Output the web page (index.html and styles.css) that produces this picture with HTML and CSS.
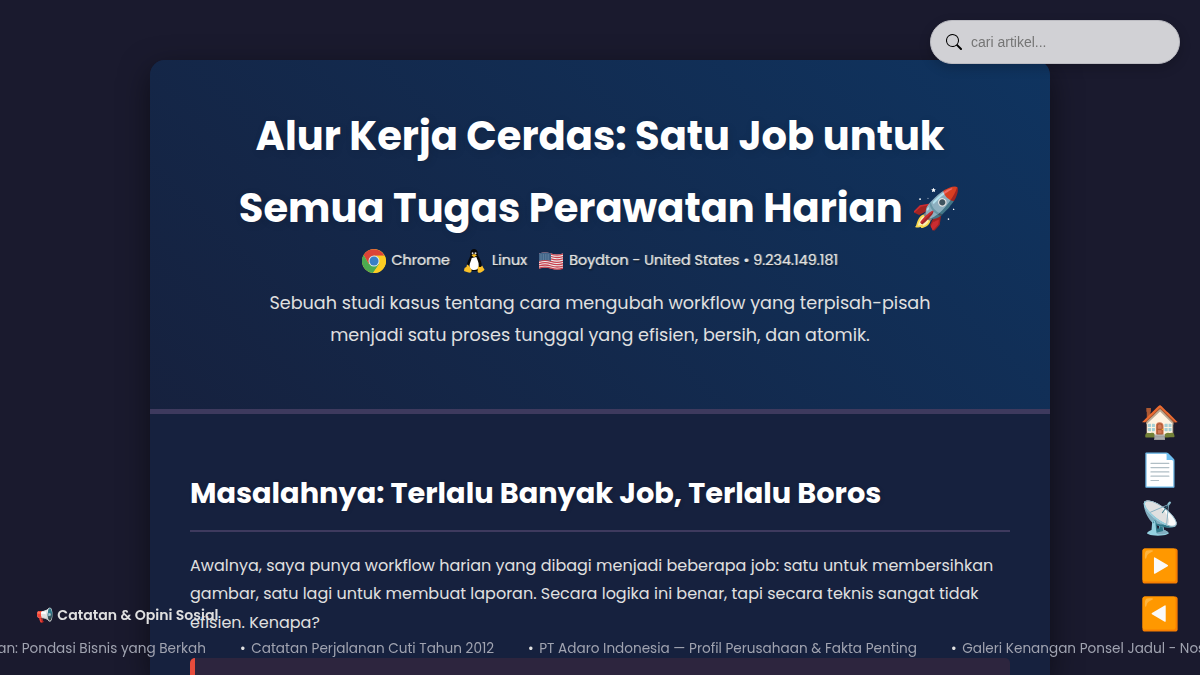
FILE: index.html
```html
<!DOCTYPE html>
<html lang="id">
<head>
<meta charset="utf-8">
<title>Alur Kerja Cerdas</title>
<link rel="stylesheet" href="styles.css">
</head>
<body>
<form class="search">
  <svg class="search-icon" viewBox="0 0 16 16" width="16" height="16" fill="currentColor"><path d="M11.742 10.344a6.5 6.5 0 1 0-1.397 1.398h-.001q.044.06.098.115l3.85 3.85a1 1 0 0 0 1.415-1.414l-3.85-3.85a1 1 0 0 0-.115-.1zM12 6.5a5.5 5.5 0 1 1-11 0 5.5 5.5 0 0 1 11 0"/></svg>
  <input class="search-input" type="text" placeholder="cari artikel...">
</form>
<main class="container">
  <header class="header">
    <h1 class="title"><span class="title-a">Alur Kerja Cerdas: Satu Job untuk</span><span class="title-b">Semua Tugas Perawatan Harian <span class="rocket">🚀</span></span></h1>
    <div class="visitor">
      <svg class="browser-icon" viewBox="0 0 48 48" width="24" height="24"><circle cx="24" cy="24" r="24" fill="#f8cf35"/><path d="M3.200 12A24 24 0 0 1 44.800 13.500H24L13.600 30Z" fill="#dc4437"/><path d="M3.200 12A24 24 0 0 0 22 48L34.400 30H13.600Z" fill="#4cab50"/><path d="M45.500 13.500A24 24 0 0 1 22 48L34.400 30 27 13.500Z" fill="#fccd22"/><circle cx="24" cy="24" r="11" fill="#dfe8e8"/><circle cx="24" cy="24" r="9" fill="#397fc5"/></svg>
      <span class="browser">Chrome</span>
      <svg class="tux" viewBox="0 0 24 24" width="24" height="24"><path d="M8.500 5C8 1.500 10 0 12 0s4 1.500 3.800 5c0 3 4.200 6 3.800 12-.3 4-3 5-7 5-5 0-8-1-7.600-5C5 12 8.700 8.500 8.500 5Z" fill="#080808"/><path d="M9.700 9 14.300 8c1 3 2.700 5 2.400 9-.3 3-2 4-4.600 4s-4.600-1-4.600-4c0-3 1.700-5 2.200-8Z" fill="#fff"/><ellipse cx="10.600" cy="4.300" rx=".9" ry="1.100" fill="#ddd"/><ellipse cx="13.500" cy="4.300" rx="1" ry="1.100" fill="#ddd"/><path d="m9.500 6.300 2.500-1.200 3 1.200-3 2Z" fill="#f6bd20"/><path d="M5 15.500c2 .5 3.500 3.500 4.500 5.500.5 2-1 3-3 2.500l-4-1.200c-1-.5 0-2 0-3 .2-1 1.400-.8 2-1.600ZM16 16.500c1 2 3 2 4 0 1 1 1 2.500 2 3.200 1.200 1-.3 1.800-1.500 2.800-2 1.600-4.500 2-4.900 0Z" fill="#fbc128"/></svg>
      <span class="os">Linux</span>
      <svg class="us" viewBox="0 0 24 18" width="24" height="18"><path d="M0 1.500Q6-.5 12 1.500T24 1.500V16.500Q18 18.500 12 16.500T0 16.500Z" fill="#f0eded"/><g fill="none" stroke="#c94350" stroke-width="1.300"><path d="M0 2.100q6-2 12 0t12 0M0 4.500q6-2 12 0t12 0M0 6.900q6-2 12 0t12 0M0 9.300q6-2 12 0t12 0M0 11.700q6-2 12 0t12 0M0 14q6-2 12 0t12 0M0 16.200q6-2 12 0t12 0"/></g><path d="M0 1.500Q6-.5 12 1.500V9Q6 7 0 9Z" fill="#416589"/><path d="M1.500 3h9M1.500 5h9M1.500 7h9" stroke="#9ab2c4" stroke-width=".7" stroke-dasharray="1 1.400"/></svg>
      <span class="place">Boydton - United States • 9.234.149.181</span>
    </div>
    <p class="subtitle"><span class="sub-a">Sebuah studi kasus tentang cara mengubah workflow yang terpisah-pisah</span><span class="sub-b">menjadi satu proses tunggal yang efisien, bersih, dan atomik.</span></p>
  </header>
  <section class="content">
    <h2 class="heading">Masalahnya: Terlalu Banyak Job, Terlalu Boros</h2>
    <p class="text"><span class="text-a">Awalnya, saya punya workflow harian yang dibagi menjadi beberapa job: satu untuk membersihkan</span><span class="text-b">gambar, satu lagi untuk membuat laporan. Secara logika ini benar, tapi secara teknis sangat tidak</span><span class="text-c">efisien. Kenapa?</span></p>
    <div class="callout"></div>
  </section>
</main>
<nav class="side-nav"><span>🏠</span><span>📄</span><span>📡</span><span>▶️</span><span>◀️</span></nav>
<aside class="ticker-title"><span class="horn">📢</span> <span>Catatan &amp; Opini Sosial</span></aside>
<div class="ticker"><span class="item first">an: Pondasi Bisnis yang Berkah</span><span class="item second"><b>•</b> Catatan Perjalanan Cuti Tahun 2012</span><span class="item third"><b>•</b> PT Adaro Indonesia — Profil Perusahaan &amp; Fakta Penting</span><span class="item fourth"><b>•</b> Galeri Kenangan Ponsel Jadul - Nostalgia</span></div>
</body>
</html>
```
FILE: styles.css
```css
* { box-sizing: border-box; }
body { margin: 0; height: 675px; overflow: hidden; background: #1a1a2e; color: #e0e0e0; font-family: Poppins, Inter, sans-serif; font-size: 16px; line-height: 1.8; }
.container { width: 900px; height: 615px; margin: 60px auto 0; border-radius: 15px 15px 0 0; overflow: hidden; background: #16213e; box-shadow: 0 10px 30px rgba(0,0,0,.5); }
.header { height: 354px; padding: 40px 40px 0; text-align: center; background: linear-gradient(45deg, #16213e, #0f3460); border-bottom: 5px solid #3e3a5e; }
.title { margin: 0; color: #fff; font-size: 40px; line-height: 72px; font-weight: 700; text-shadow: 2px 2px 8px rgba(0,0,0,.12); }
.rocket { text-shadow: none; }
.title span, .subtitle span, .text span { white-space: nowrap; }
.title-a, .title-b, .subtitle span, .text span { display: block; }
.visitor { display: flex; align-items: center; justify-content: center; height: 32px; padding-top: 1px; font-size: 14.4px; white-space: nowrap; text-shadow: 1px 0 1px rgba(255,255,255,.55), 1px 1px 2px #000; }
.visitor svg { flex: none; margin-right: 5px; }
.browser, .os { margin-right: 12px; }
.tux + .os { margin-left: 1px; }
.us + .place { margin-left: 1px; }
.subtitle { margin: 11px 0 0; font-size: 17.6px; line-height: 32px; }
.content { height: 261px; padding: 57px 40px 0; overflow: hidden; }
.heading { height: 61px; margin: 0 0 20px; border-bottom: 2px solid #3e3a5e; color: #fff; font-size: 28.8px; line-height: 45px; font-weight: 700; white-space: nowrap; text-shadow: 1px 1px 4px rgba(0,0,0,.12); }
.text { margin: 0; line-height: 28.4px; }
.callout { height: 23px; margin-top: 20.8px; border-left: 5px solid #e74c3c; border-radius: 5px 5px 0 0; background: #2d253e; }
.search { position: fixed; top: 20px; right: 20px; width: 250px; height: 44px; display: flex; align-items: center; padding-left: 15px; border: 1px solid #bcbcc2; border-radius: 22px; background: #d1d1d5; color: #000; box-shadow: 0 4px 12px rgba(0,0,0,.2); }
.search-input { width: 190px; margin-left: 9px; padding: 0; border: 0; outline: 0; background: transparent; font: 14px "Liberation Sans", sans-serif; }
.search-input::placeholder { color: #757575; }
.side-nav { position: fixed; right: 20px; top: 402px; display: flex; flex-direction: column; gap: 8px; width: 40px; font-size: 32px; line-height: 40px; text-align: center; }
.side-nav span { height: 40px; }
.ticker-title { position: fixed; left: 36px; top: 602px; font-size: 14.08px; line-height: 26px; font-weight: 600; white-space: nowrap; }
.ticker { position: fixed; left: 0; right: 0; top: 636px; display: flex; height: 26px; overflow: hidden; font-size: 13.6px; line-height: 26px; color: #a0a3b0; white-space: nowrap; }
.ticker b { margin-right: 2px; color: #e0e0e0; font-weight: 400; }
.item { flex: none; }
.first { width: 240px; padding-right: 34px; display: flex; justify-content: flex-end; }
.second { width: 288px; }
.third { width: 423px; }
```
